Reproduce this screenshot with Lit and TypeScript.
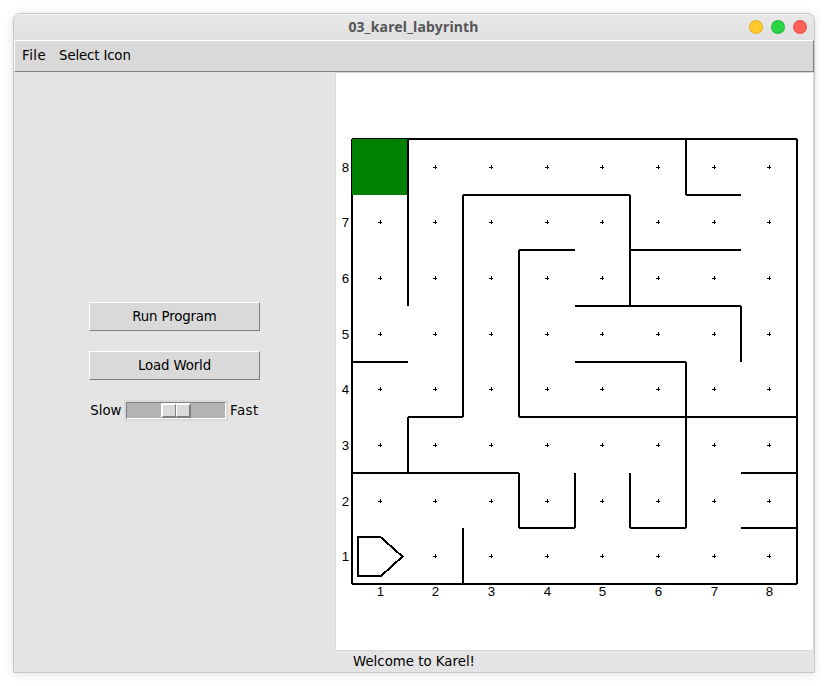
import { LitElement, html, svg, css } from "lit";
import { customElement } from "lit/decorators.js";

const CELL = 55.625;
const N = 8;
const gx = (c: number) => Math.round(16 + c * CELL);
const gy = (r: number) => Math.round(66 + r * CELL);

// Walls in grid corners, row 0 at the top: [column, row, column, row]
const WALLS = [
  [2, 1, 5, 1], [6, 1, 7, 1],
  [3, 2, 4, 2], [5, 2, 7, 2],
  [4, 3, 7, 3],
  [0, 4, 1, 4], [4, 4, 6, 4],
  [1, 5, 2, 5], [3, 5, 8, 5],
  [0, 6, 3, 6], [7, 6, 8, 6],
  [3, 7, 4, 7], [5, 7, 6, 7], [7, 7, 8, 7],
  [1, 0, 1, 3], [1, 5, 1, 6],
  [2, 1, 2, 5], [2, 7, 2, 8],
  [3, 2, 3, 5], [3, 6, 3, 7],
  [4, 6, 4, 7],
  [5, 1, 5, 3], [5, 6, 5, 7],
  [6, 0, 6, 1], [6, 4, 6, 7],
  [7, 3, 7, 4],
];
const BORDER = [[0, 0, 8, 0], [0, 8, 8, 8], [0, 0, 0, 8], [8, 0, 8, 8]];

@customElement("karel-world")
export class KarelWorld extends LitElement {
  static styles = css`
    :host { display: block; background: #fff; }
    svg { display: block; }
    .wall { stroke: #000; stroke-width: 2; }
    .beeper { fill: #008000; }
    .mark { fill: #000; }
    .karel { fill: #fff; stroke: #000; stroke-width: 2; stroke-linejoin: round; }
    text { font: 13.3px "Liberation Sans", Arial, sans-serif; fill: #000; text-anchor: middle; }
  `;

  private line([a, b, c, d]: number[]) {
    return svg`<line class="wall" x1=${gx(a)} y1=${gy(b)} x2=${gx(c)} y2=${gy(d)} />`;
  }

  render() {
    const idx = [...Array(N).keys()];
    return html`<svg width="477" height="577" viewBox="0 0 477 577" shape-rendering="crispEdges">
      ${BORDER.map((w) => this.line(w))}
      <rect class="beeper" x=${gx(0)} y=${gy(0)} width=${gx(1) - gx(0)} height=${gy(1) - gy(0)} />
      ${idx.map((r) => idx.map((c) => {
        if (r === 0 && c === 0) return null;
        if (r === N - 1 && c === 0) return null;
        const x = gx(c + 0.5), y = gy(r + 0.5);
        return svg`<path class="mark" d="M${x - 2} ${y}h4v1h-4zM${x} ${y - 2}h1v4h-1z" />`;
      }))}
      ${WALLS.map((w) => this.line(w))}
      <path class="karel" d="M22 464H44.500L66.500 483.500L45 503H22Z" />
      ${idx.map((i) => svg`
        <text x=${gx(i + 0.5) + 0.5} y="523">${i + 1}</text>
        <text x="9.500" y=${gy(i + 0.5) + 5}>${N - i}</text>`)}
    </svg>`;
  }
}

@customElement("app-root")
export class AppRoot extends LitElement {
  static styles = css`
    :host {
      display: block; box-sizing: border-box; width: 828px; height: 686px;
      padding: 13px; background: #fff; overflow: hidden;
      font: 13.33px/18px "DejaVu Sans", sans-serif; color: #000;
    }
    .window {
      box-sizing: border-box; width: 802px; height: 660px;
      display: flex; flex-direction: column;
      border: 1px solid #c8c8c8; border-radius: 7px 7px 0 0; overflow: hidden;
      background: #e4e4e4; box-shadow: 0 1px 10px rgba(0, 0, 0, 0.13);
    }
    .title {
      box-sizing: border-box; height: 26px; flex: none;
      display: grid; grid-template-columns: 1fr auto 1fr; align-items: center;
      border-top: 1px solid #f5f5f5;
      background: linear-gradient(#e8e8e8, #e0e0e0);
      padding: 0 7px 1px 0;
    }
    .name {
      grid-column: 2; padding-left: 6px; margin-bottom: 1px;
      font: bold 14px/20px "Noto Sans", sans-serif; letter-spacing: 0.18px; color: #565656;
    }
    .lights { display: flex; justify-content: flex-end; gap: 8px; }
    .light { box-sizing: border-box; width: 14px; height: 14px; border-radius: 50%; border: 1px solid rgba(0, 0, 0, 0.12); }
    .min { background: #ffca2c; }
    .max { background: #28d442; }
    .close { background: #ff6055; }
    .menu {
      box-sizing: border-box; height: 32px; flex: none; display: flex; gap: 13px;
      padding: 6px 8px 0 7px; background: #d9d9d9;
      border: 1px solid #fff; border-right-color: #7f7f7f; border-bottom-color: #7f7f7f;
    }
    .file { letter-spacing: 0.45px; }
    .icon { letter-spacing: -0.15px; }
    .body { flex: 1; min-height: 0; display: grid; grid-template-columns: 321px 479px; }
    .side { display: flex; flex-direction: column; align-items: center; padding-top: 230px; }
    .button {
      box-sizing: border-box; width: 171px; height: 29px; margin-bottom: 20px;
      border: 1px solid #fff; border-right-color: #7f7f7f; border-bottom-color: #7f7f7f;
      background: #d9d9d9; text-align: center; line-height: 28px; letter-spacing: -0.15px;
    }
    .speed { display: grid; grid-template-columns: 32px 104px 31px; column-gap: 2px; align-items: center; height: 20px; margin-left: 1px; }
    .speed span { white-space: nowrap; }
    .slow { text-align: right; }
    .fast { letter-spacing: 0.45px; padding-left: 0.5px; }
    .scale { box-sizing: border-box; width: 104px; height: 21px; border: 2px solid #d9d9d9; }
    .trough {
      box-sizing: border-box; width: 100px; height: 17px; padding-left: 34px;
      border: 1px solid #7f7f7f; border-right-color: #fff; border-bottom-color: #fff;
      background: #b3b3b3; display: flex;
    }
    .slider, .half {
      box-sizing: border-box; background: #d9d9d9;
      border: 1px solid #fff; border-right-color: #7f7f7f; border-bottom-color: #7f7f7f;
    }
    .slider { display: flex; width: 30px; height: 15px; }
    .half { width: 14px; height: 13px; }
    .world { box-sizing: border-box; height: 579px; border: 1px solid #d9d9d9; }
    .status { padding: 2px 0 0 18px; }
  `;

  render() {
    return html`<div class="window">
      <div class="title">
        <div class="name">03_karel_labyrinth</div>
        <div class="lights"><i class="light min"></i><i class="light max"></i><i class="light close"></i></div>
      </div>
      <div class="menu"><span class="file">File</span><span class="icon">Select Icon</span></div>
      <div class="body">
        <div class="side">
          <div class="button">Run Program</div>
          <div class="button">Load World</div>
          <div class="speed">
            <span class="slow">Slow</span>
            <div class="scale"><div class="trough">
              <div class="slider"><div class="half"></div><div class="half"></div></div>
            </div></div>
            <span class="fast">Fast</span>
          </div>
        </div>
        <div>
          <karel-world class="world"></karel-world>
          <div class="status">Welcome to Karel!</div>
        </div>
      </div>
    </div>`;
  }
}
